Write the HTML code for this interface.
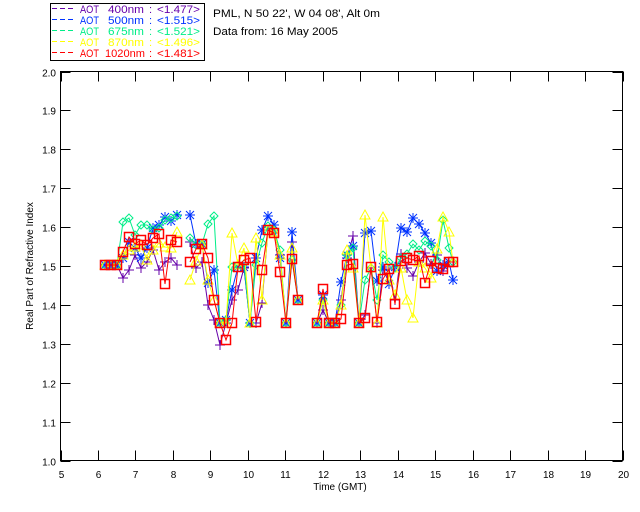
<!DOCTYPE html>
<html><head><meta charset="utf-8"><style>
html,body{margin:0;padding:0;background:#fff;}
svg{display:block;font-family:"Liberation Sans",sans-serif;}
</style></head><body>
<svg id="s" width="640" height="512" viewBox="0 0 640 512" xmlns="http://www.w3.org/2000/svg">
<rect width="640" height="512" fill="#fff"/>
<rect x="50.5" y="3.5" width="154" height="57" fill="#fff" stroke="#000" stroke-width="1"/>
<g font-size="11" id="leg"></g>
<g font-size="11">
<text x="213" y="17" fill="#000" textLength="167" lengthAdjust="spacingAndGlyphs">PML, N 50 22', W 04 08', Alt 0m</text>
<text x="213" y="35" fill="#000" textLength="125" lengthAdjust="spacingAndGlyphs">Data from: 16 May 2005</text>
</g>
<g id="ax" stroke="#000" stroke-width="1" fill="none"></g>
<g id="lab" font-size="10" fill="#000"></g>
<text x="340" y="490" font-size="10" text-anchor="middle">Time (GMT)</text>
<text transform="translate(33,266) rotate(-90)" font-size="10" text-anchor="middle">Real Part of Refractive Index</text>
<g id="data"></g>
</svg>
<script>
var NS="http://www.w3.org/2000/svg";
function el(t,a,p){var e=document.createElementNS(NS,t);for(var k in a)e.setAttribute(k,a[k]);p.appendChild(e);return e;}
var leg=document.getElementById('leg');
var LG=[['#6600aa',' 400nm','<1.477>'],['#0033ff',' 500nm','<1.515>'],['#00ee88',' 675nm','<1.521>'],['#ffff00',' 870nm','<1.496>'],['#ff0000','1020nm','<1.481>']];
LG.forEach(function(r,i){var y=13+i*11;
 el('line',{x1:52,y1:y-4.5,x2:74,y2:y-4.5,stroke:r[0],'stroke-dasharray':'5 3'},leg);
 var t=el('text',{x:80,y:y,fill:r[0],textLength:19,lengthAdjust:'spacingAndGlyphs'},leg);t.textContent='AOT';
 t=el('text',{x:105,y:y,fill:r[0],textLength:40,lengthAdjust:'spacingAndGlyphs'},leg);t.textContent=r[1].trim();
 if(r[1][0]==' ')t.setAttribute('x',108),t.setAttribute('textLength',36);
 t=el('text',{x:149,y:y,fill:r[0]},leg);t.textContent=':';
 t=el('text',{x:157,y:y,fill:r[0],textLength:43,lengthAdjust:'spacingAndGlyphs'},leg);t.textContent=r[2];
});
var L=60.5,R=622.5,T=71.5,B=460.5;
var ax=document.getElementById('ax'),lab=document.getElementById('lab');
el('rect',{x:L,y:T,width:R-L,height:B-T},ax);
for(var i=5;i<=20;i++){var x=L+(R-L)*(i-5)/15;x=Math.round(x)+0.5;
 el('line',{x1:x,y1:B,x2:x,y2:B-10},ax);el('line',{x1:x,y1:T,x2:x,y2:T+10},ax);
 var t=el('text',{x:x,y:478,'text-anchor':'middle'},lab);t.textContent=i;}
for(var j=0;j<=10;j++){var y=B-(B-T)*j/10;y=Math.round(y)+0.5;
 el('line',{x1:L,y1:y,x2:L+10,y2:y},ax);el('line',{x1:R,y1:y,x2:R-10,y2:y},ax);
 var t=el('text',{x:56,y:y+4,'text-anchor':'end'},lab);t.textContent=(1+j/10).toFixed(1);}
var X=[105,111,117,123,129,135,141,147,153,159,165,171,177,190,196,202,208,214,220,226,232,238,244,250,256,262,268,274,280,286,292,298,317,323,329,335,341,347,353,359,365,371,377,383,389,395,401,407,413,419,425,431,437,443,449,453];
var S={
red:   [265,265,265,252,237,244,240,245,238,234,284,240,242,262,249,244,258,300,323,340,323,267,260,258,322,270,230,233,272,323,259,300,323,289,323,323,319,265,264,323,318,267,322,279,269,304,261,258,260,256,283,261,268,269,262,262],
purple:[265,265,265,278,270,255,268,262,250,270,262,258,265,242,268,262,305,320,345,323,300,290,268,323,323,303,230,233,255,323,242,300,323,310,323,323,300,258,236,323,315,268,323,270,269,300,254,268,276,262,253,264,255,271,262,262],
blue:  [265,265,265,258,242,248,258,248,228,225,217,221,215,215,244,244,283,270,323,320,290,267,267,323,258,230,216,225,258,323,232,300,323,295,323,323,282,255,246,323,233,231,281,267,284,267,228,232,218,224,233,243,271,265,262,280],
green: [265,265,265,222,218,235,225,225,230,228,220,218,216,238,245,244,224,216,323,320,267,265,264,323,265,243,226,230,250,323,260,300,323,300,323,323,305,255,248,323,280,268,300,255,262,268,258,254,244,250,241,246,260,220,248,262],
yellow:[265,265,265,255,250,247,245,260,250,243,247,248,232,280,261,245,280,300,323,323,233,265,248,323,238,300,230,232,255,323,248,300,323,300,323,323,305,250,268,323,215,268,323,217,280,295,268,300,318,262,268,278,249,217,232,262]
};
var col={purple:'#6600aa',blue:'#0033ff',green:'#00ee88',yellow:'#ffff00',red:'#ff0000'};
var order=['purple','blue','green','yellow','red'];
var d=document.getElementById('data');
order.forEach(function(k){
 var segs=[[0,13],[13,32],[32,56]];
 segs.forEach(function(sg){var pts=[];for(var i=sg[0];i<sg[1];i++)pts.push(X[i]+','+S[k][i]);
  el('polyline',{points:pts.join(' '),fill:'none',stroke:col[k],'stroke-width':1},d);});
 for(var i=0;i<X.length;i++){var x=X[i],y=S[k][i],c=col[k];
  if(k=='purple'){el('path',{d:'M'+(x-5)+' '+y+'h10M'+x+' '+(y-5)+'v10',stroke:c,fill:'none'},d);}
  else if(k=='blue'){el('path',{d:'M'+(x-5)+' '+y+'h10M'+x+' '+(y-5)+'v10M'+(x-4)+' '+(y-4)+'l8 8M'+(x+4)+' '+(y-4)+'l-8 8',stroke:c,fill:'none'},d);}
  else if(k=='green'){el('path',{d:'M'+x+' '+(y-4)+'l4 4l-4 4l-4 -4z',stroke:c,fill:'none'},d);}
  else if(k=='yellow'){el('path',{d:'M'+x+' '+(y-5)+'l5 9h-10z',stroke:c,fill:'none'},d);}
  else {el('rect',{x:x-4.5,y:y-4.5,width:9,height:9,stroke:c,fill:'none','stroke-width':1.5},d);}
 }
});
</script>
</body></html>
